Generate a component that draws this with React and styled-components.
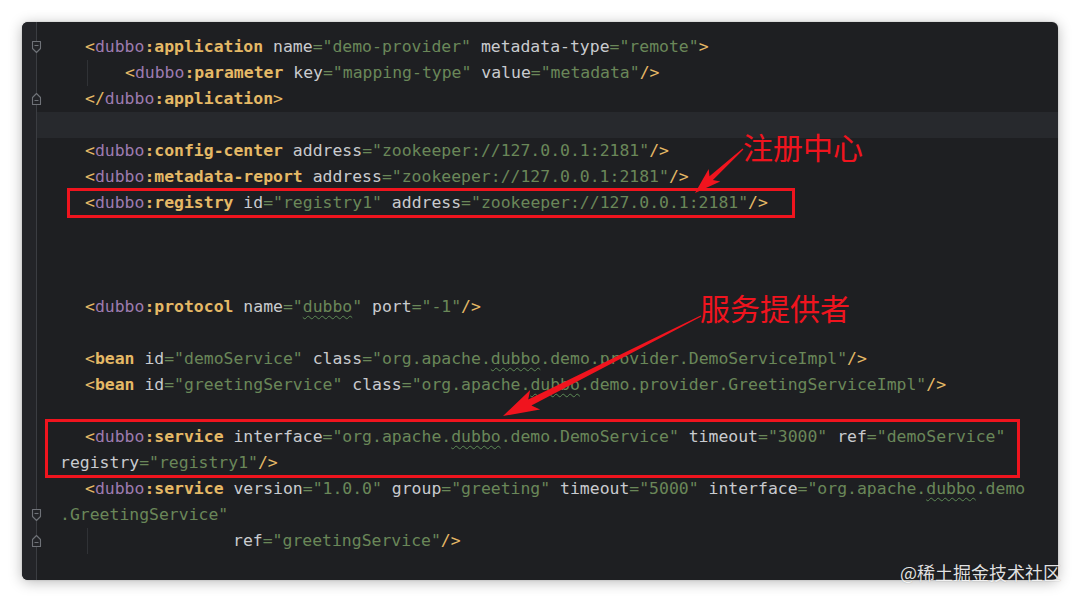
import React from 'react';
import styled, { createGlobalStyle, css } from 'styled-components';

const GlobalStyle = createGlobalStyle`
    html, body {
        margin: 0;
        padding: 0;
        background: #fff;
    }
`;

const RED = '#f0141e';

const StyledPage = styled.div`
    position: relative;
    width: 1080px;
    height: 603px;
    padding: 22px 22px 23px;
    box-sizing: border-box;
`;

const StyledPanel = styled.div`
    position: relative;
    display: flex;
    height: 100%;
    background: #1e1f22;
    border-radius: 6px;
    box-shadow: 0 2px 14px rgba(0, 0, 0, .28), 0 0 2px rgba(0, 0, 0, .2);
    overflow: hidden;
`;

const StyledGutter = styled.div`
    display: flex;
    flex-direction: column;
    width: 14px;
    padding-top: 12px;
    background: #232428;
    border-right: 1px solid #3b3d42;
`;

const StyledGutterRow = styled.div`
    display: flex;
    align-items: center;
    justify-content: flex-end;
    height: 26px;

    svg {
        margin-right: -6px;
        position: relative;
        z-index: 1;
    }
`;

const StyledCode = styled.div`
    flex: 1;
    padding-top: 12px;
    font-family: "DejaVu Sans Mono", "Liberation Mono", monospace;
    font-size: 16.45px;
    color: #c6c8cc;
`;

const StyledLine = styled.div`
    height: 26px;
    line-height: 26px;
    white-space: pre;
    padding-left: ${({ $indent }) => $indent + 23}px;

    ${({ $current }) => $current && css`
        background: #27292d;
    `}

    ${({ $guide }) => $guide && css`
        background-image: linear-gradient(#303236, #303236);
        background-size: 1px 26px;
        background-repeat: no-repeat;
        background-position: ${$guide}px 0;
    `}
`;

const tokenStyles = {
    p: css`color: #e5b966;`,
    ns: css`color: #9d7bb0;`,
    tag: css`color: #e5b966; font-weight: bold;`,
    attr: css`color: #c9cbcf;`,
    str: css`color: #6a8759;`,
};

const StyledToken = styled.span`
    ${({ $kind }) => tokenStyles[$kind]}

    ${({ $wavy }) => $wavy && css`
        text-decoration-line: underline;
        text-decoration-style: wavy;
        text-decoration-color: #5d8a55;
        text-decoration-thickness: 1px;
        text-underline-offset: 3px;
    `}
`;

// annotation layer drawn over the editor
const StyledFrame = styled.div`
    position: absolute;
    left: ${({ $x }) => $x}px;
    top: ${({ $y }) => $y}px;
    width: ${({ $w }) => $w}px;
    height: ${({ $h }) => $h}px;
    border: 3px solid ${RED};
    box-sizing: border-box;
    pointer-events: none;
`;

const StyledLabel = styled.div`
    position: absolute;
    left: ${({ $x }) => $x}px;
    top: ${({ $y }) => $y}px;
    font-family: "Noto Sans CJK SC", "Noto Sans", sans-serif;
    font-size: 30px;
    line-height: 1;
    color: ${RED};
    white-space: nowrap;
`;

const StyledOverlay = styled.svg`
    position: absolute;
    inset: 0;
    width: 100%;
    height: 100%;
    pointer-events: none;
`;

const StyledWatermark = styled.div`
    position: absolute;
    right: 19px;
    bottom: 22px;
    font-family: "Noto Sans CJK SC", "Noto Sans", sans-serif;
    font-size: 18px;
    line-height: 1;
    color: rgba(255, 255, 255, .88);
    text-shadow: 0 0 1px rgba(0, 0, 0, .35);
    white-space: nowrap;
`;

const FoldIcon = ({ open }) => (
    <svg width="11" height="14" viewBox="0 0 11 14">
        <path
            d={open ? 'M1.5 1.5h8v7l-4 4l-4-4z' : 'M1.5 12.5h8v-7l-4-4l-4 4z'}
            fill="#232428" stroke="#6f7278" strokeWidth="1.1" strokeLinejoin="round" />
        <path d={open ? 'M3.5 5.5h4' : 'M3.5 8.5h4'} stroke="#6f7278" strokeWidth="1.1" />
    </svg>
);

const arrowPoints = ([tx, ty], [px, py], headLen, headW, w0, w1) => {
    const len = Math.hypot(px - tx, py - ty);
    const dx = (px - tx) / len;
    const dy = (py - ty) / len;
    const nx = -dy;
    const ny = dx;
    const bx = px - dx * headLen;
    const by = py - dy * headLen;
    const wx = bx - dx * headLen * .2;
    const wy = by - dy * headLen * .2;
    return [
        [tx + nx * w0 / 2, ty + ny * w0 / 2],
        [bx + nx * w1 / 2, by + ny * w1 / 2],
        [wx + nx * headW / 2, wy + ny * headW / 2],
        [px, py],
        [wx - nx * headW / 2, wy - ny * headW / 2],
        [bx - nx * w1 / 2, by - ny * w1 / 2],
        [tx - nx * w0 / 2, ty - ny * w0 / 2],
    ].map(p => p.map(v => v.toFixed(1)).join(',')).join(' ');
};

const open = (name, bean) => bean
    ? [['p', '<'], ['tag', name]]
    : [['p', '<'], ['ns', 'dubbo'], ['tag', ':' + name]];
const attr = (name, value) => [['attr', ' ' + name], ['str', '="' + value + '"']];

const lines = [
    { indent: 25, fold: 'open', tokens: [...open('application'), ...attr('name', 'demo-provider'), ...attr('metadata-type', 'remote'), ['p', '>']] },
    { indent: 65, guide: 50, tokens: [...open('parameter'), ...attr('key', 'mapping-type'), ...attr('value', 'metadata'), ['p', '/>']] },
    { indent: 25, fold: 'close', tokens: [['p', '</'], ['ns', 'dubbo'], ['tag', ':application'], ['p', '>']] },
    { current: true, tokens: [] },
    { indent: 25, tokens: [...open('config-center'), ...attr('address', 'zookeeper://127.0.0.1:2181'), ['p', '/>']] },
    { indent: 25, tokens: [...open('metadata-report'), ...attr('address', 'zookeeper://127.0.0.1:2181'), ['p', '/>']] },
    { indent: 25, tokens: [...open('registry'), ...attr('id', 'registry1'), ...attr('address', 'zookeeper://127.0.0.1:2181'), ['p', '/>']] },
    { tokens: [] },
    { tokens: [] },
    { tokens: [] },
    { indent: 25, tokens: [...open('protocol'), ['attr', ' name'], ['str', '="'], ['str', 'dubbo', true], ['str', '"'], ...attr('port', '-1'), ['p', '/>']] },
    { tokens: [] },
    { indent: 25, tokens: [...open('bean', true), ...attr('id', 'demoService'), ['attr', ' class'], ['str', '="org.apache.'], ['str', 'dubbo', true], ['str', '.demo.provider.DemoServiceImpl"'], ['p', '/>']] },
    { indent: 25, tokens: [...open('bean', true), ...attr('id', 'greetingService'), ['attr', ' class'], ['str', '="org.apache.'], ['str', 'dubbo', true], ['str', '.demo.provider.GreetingServiceImpl"'], ['p', '/>']] },
    { tokens: [] },
    { indent: 25, tokens: [...open('service'), ['attr', ' interface'], ['str', '="org.apache.'], ['str', 'dubbo', true], ['str', '.demo.DemoService"'], ...attr('timeout', '3000'), ...attr('ref', 'demoService')] },
    { indent: 0, tokens: [['attr', 'registry'], ['str', '="registry1"'], ['p', '/>']] },
    { indent: 25, tokens: [...open('service'), ...attr('version', '1.0.0'), ...attr('group', 'greeting'), ...attr('timeout', '5000'), ['attr', ' interface'], ['str', '="org.apache.'], ['str', 'dubbo', true], ['str', '.demo']] },
    { indent: 0, fold: 'open', tokens: [['str', '.GreetingService"']] },
    { indent: 173, fold: 'close', guide: 50, tokens: [['attr', 'ref'], ['str', '="greetingService"'], ['p', '/>']] },
];

const CodeLine = ({ indent = 0, current, guide, tokens }) => (
    <StyledLine $indent={indent} $current={current} $guide={guide}>
        {tokens.length ? tokens.map(([kind, text, wavy], i) => (
            <StyledToken key={i} $kind={kind} $wavy={wavy}>{text}</StyledToken>
        )) : ' '}
    </StyledLine>
);

const Annotations = () => (
    <>
        <StyledFrame $x={45} $y={166} $w={728} $h={30} />
        <StyledFrame $x={23} $y={397} $w={975} $h={59} />
        <StyledOverlay>
            <polygon points={arrowPoints([721, 127], [673, 171], 22, 17, 1.2, 5)} fill={RED} />
            <polygon points={arrowPoints([679, 294], [481, 394], 30, 22, 1.2, 7)} fill={RED} />
        </StyledOverlay>
        <StyledLabel $x={721} $y={109}>注册中心</StyledLabel>
        <StyledLabel $x={678} $y={270}>服务提供者</StyledLabel>
    </>
);

const App = () => (
    <StyledPage>
        <GlobalStyle />
        <StyledPanel>
            <StyledGutter>
                {lines.map((line, i) => (
                    <StyledGutterRow key={i}>
                        {line.fold && <FoldIcon open={line.fold === 'open'} />}
                    </StyledGutterRow>
                ))}
            </StyledGutter>
            <StyledCode>
                {lines.map((line, i) => <CodeLine key={i} {...line} />)}
            </StyledCode>
            <Annotations />
        </StyledPanel>
        <StyledWatermark>@稀土掘金技术社区</StyledWatermark>
    </StyledPage>
);

export default App;
